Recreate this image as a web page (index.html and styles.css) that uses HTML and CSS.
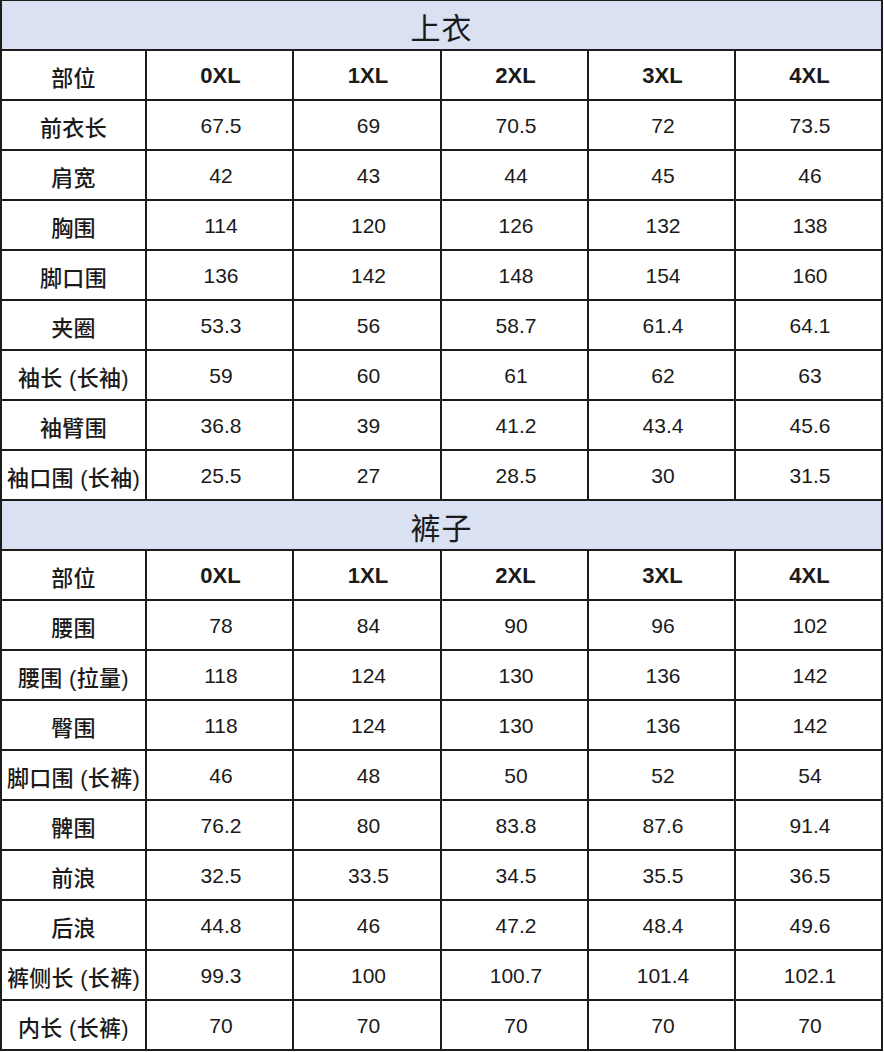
FILE: index.html
```html
<!DOCTYPE html>
<html lang="zh">
<head>
<meta charset="utf-8">
<title>尺码表</title>
<link rel="stylesheet" href="styles.css">
</head>
<body>
<div class="sheet">
  <div class="cell title">上衣</div>
  <div class="cell label">部位</div><div class="cell size">0XL</div><div class="cell size">1XL</div><div class="cell size">2XL</div><div class="cell size">3XL</div><div class="cell size">4XL</div>
  <div class="cell label">前衣长</div><div class="cell num">67.5</div><div class="cell num">69</div><div class="cell num">70.5</div><div class="cell num">72</div><div class="cell num">73.5</div>
  <div class="cell label">肩宽</div><div class="cell num">42</div><div class="cell num">43</div><div class="cell num">44</div><div class="cell num">45</div><div class="cell num">46</div>
  <div class="cell label">胸围</div><div class="cell num">114</div><div class="cell num">120</div><div class="cell num">126</div><div class="cell num">132</div><div class="cell num">138</div>
  <div class="cell label">脚口围</div><div class="cell num">136</div><div class="cell num">142</div><div class="cell num">148</div><div class="cell num">154</div><div class="cell num">160</div>
  <div class="cell label">夹圈</div><div class="cell num">53.3</div><div class="cell num">56</div><div class="cell num">58.7</div><div class="cell num">61.4</div><div class="cell num">64.1</div>
  <div class="cell label">袖长 (长袖)</div><div class="cell num">59</div><div class="cell num">60</div><div class="cell num">61</div><div class="cell num">62</div><div class="cell num">63</div>
  <div class="cell label">袖臂围</div><div class="cell num">36.8</div><div class="cell num">39</div><div class="cell num">41.2</div><div class="cell num">43.4</div><div class="cell num">45.6</div>
  <div class="cell label">袖口围 (长袖)</div><div class="cell num">25.5</div><div class="cell num">27</div><div class="cell num">28.5</div><div class="cell num">30</div><div class="cell num">31.5</div>

  <div class="cell title">裤子</div>
  <div class="cell label">部位</div><div class="cell size">0XL</div><div class="cell size">1XL</div><div class="cell size">2XL</div><div class="cell size">3XL</div><div class="cell size">4XL</div>
  <div class="cell label">腰围</div><div class="cell num">78</div><div class="cell num">84</div><div class="cell num">90</div><div class="cell num">96</div><div class="cell num">102</div>
  <div class="cell label">腰围 (拉量)</div><div class="cell num">118</div><div class="cell num">124</div><div class="cell num">130</div><div class="cell num">136</div><div class="cell num">142</div>
  <div class="cell label">臀围</div><div class="cell num">118</div><div class="cell num">124</div><div class="cell num">130</div><div class="cell num">136</div><div class="cell num">142</div>
  <div class="cell label">脚口围 (长裤)</div><div class="cell num">46</div><div class="cell num">48</div><div class="cell num">50</div><div class="cell num">52</div><div class="cell num">54</div>
  <div class="cell label">髀围</div><div class="cell num">76.2</div><div class="cell num">80</div><div class="cell num">83.8</div><div class="cell num">87.6</div><div class="cell num">91.4</div>
  <div class="cell label">前浪</div><div class="cell num">32.5</div><div class="cell num">33.5</div><div class="cell num">34.5</div><div class="cell num">35.5</div><div class="cell num">36.5</div>
  <div class="cell label">后浪</div><div class="cell num">44.8</div><div class="cell num">46</div><div class="cell num">47.2</div><div class="cell num">48.4</div><div class="cell num">49.6</div>
  <div class="cell label">裤侧长 (长裤)</div><div class="cell num">99.3</div><div class="cell num">100</div><div class="cell num">100.7</div><div class="cell num">101.4</div><div class="cell num">102.1</div>
  <div class="cell label">内长 (长裤)</div><div class="cell num">70</div><div class="cell num">70</div><div class="cell num">70</div><div class="cell num">70</div><div class="cell num">70</div>
</div>
</body>
</html>
```

FILE: styles.css
```css
html, body {
  margin: 0;
  padding: 0;
  background: #ffffff;
}

.sheet {
  display: grid;
  grid-template-columns: 145px 147px 148px 147px 147px 147px;
  grid-auto-rows: 50px;
  width: 881px;
  border-left: 2px solid #1c1c1c;
  border-top: 1px solid #1c1c1c;
  color: #1a1a1a;
}

.cell {
  box-sizing: border-box;
  border-right: 2px solid #1c1c1c;
  border-bottom: 2px solid #1c1c1c;
  display: flex;
  align-items: center;
  justify-content: center;
  white-space: nowrap;
  padding-top: 2px;
}

.title {
  grid-column: 1 / -1;
  background: #d9e1f3;
  font-family: "Noto Sans CJK SC", sans-serif;
  font-size: 30px;
  letter-spacing: 1px;
  padding-top: 1px;
}

.label {
  font-family: "Liberation Sans", "Noto Sans CJK SC", sans-serif;
  font-size: 22px;
  font-weight: 500;
  letter-spacing: 0.3px;
}

.size {
  font-family: "Liberation Sans", Arial, sans-serif;
  font-size: 22px;
  font-weight: bold;
  padding-left: 2px;
}

.num {
  font-family: "Liberation Sans", Arial, sans-serif;
  font-size: 21px;
  padding-left: 3px;
}
```
